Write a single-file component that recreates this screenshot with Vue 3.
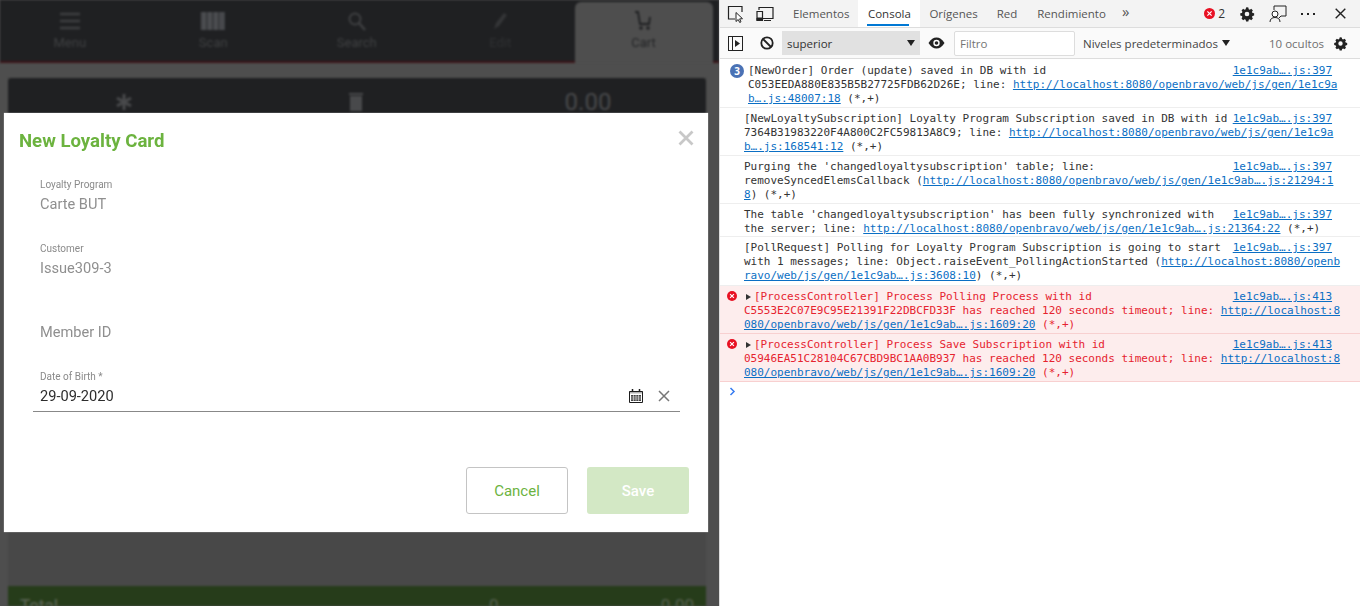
<script setup>
const rows = [
  { first: true, badge: true, src: '1e1c9ab….js:397', lines: [
    [['[NewOrder] Order (update) saved in DB with id']],
    [['C053EEDA880E835B5B27725FDB62D26E; line: '], ['http://localhost:8080/openbravo/web/js/gen/1e1c9a', 1]],
    [['b….js:48007:18', 1], [' (*,+)']] ] },
  { src: '1e1c9ab….js:397', lines: [
    [['[NewLoyaltySubscription] Loyalty Program Subscription saved in DB with id']],
    [['7364B31983220F4A800C2FC59813A8C9; line: '], ['http://localhost:8080/openbravo/web/js/gen/1e1c9a', 1]],
    [['b….js:168541:12', 1], [' (*,+)']] ] },
  { src: '1e1c9ab….js:397', lines: [
    [["Purging the 'changedloyaltysubscription' table; line:"]],
    [['removeSyncedElemsCallback ('], ['http://localhost:8080/openbravo/web/js/gen/1e1c9ab….js:21294:1', 1]],
    [['8', 1], [') (*,+)']] ] },
  { tight: true, src: '1e1c9ab….js:397', lines: [
    [["The table 'changedloyaltysubscription' has been fully synchronized with"]],
    [['the server; line: '], ['http://localhost:8080/openbravo/web/js/gen/1e1c9ab….js:21364:22', 1], [' (*,+)']] ] },
  { loose: true, src: '1e1c9ab….js:397', lines: [
    [['[PollRequest] Polling for Loyalty Program Subscription is going to start']],
    [['with 1 messages; line: Object.raiseEvent_PollingActionStarted ('], ['http://localhost:8080/openb', 1]],
    [['ravo/web/js/gen/1e1c9ab….js:3608:10', 1], [') (*,+)']] ] },
  { err: true, src: '1e1c9ab….js:413', lines: [
    [['[ProcessController] Process Polling Process with id']],
    [['C5553E2C07E9C95E21391F22DBCFD33F has reached 120 seconds timeout; line: '], ['http://localhost:8', 1]],
    [['080/openbravo/web/js/gen/1e1c9ab….js:1609:20', 1], [' (*,+)']] ] },
  { err: true, src: '1e1c9ab….js:413', lines: [
    [['[ProcessController] Process Save Subscription with id']],
    [['05946EA51C28104C67CBD9BC1AA0B937 has reached 120 seconds timeout; line: '], ['http://localhost:8', 1]],
    [['080/openbravo/web/js/gen/1e1c9ab….js:1609:20', 1], [' (*,+)']] ] },
]
const gear = 'M12 2l2 .3.6 2.500 1.600.7 2.200-1.300 2.400 2.400-1.300 2.200.7 1.600 2.500.6v3.400l-2.500.6-.7 1.600 1.300 2.200-2.400 2.400-2.200-1.300-1.600.7-.6 2.500h-3.400l-.6-2.500-1.600-.7-2.200 1.300-2.400-2.400 1.300-2.200-.7-1.600-2.500-.6v-3.400l2.500-.6.7-1.600-1.300-2.200 2.400-2.400 2.200 1.300 1.600-.7.6-2.500zM12 8.500a3.500 3.500 0 100 7 3.500 3.500 0 000-7z'
const barcode = [0, 2, 3.5, 6, 8, 9.5, 12, 14, 15.5, 18, 20, 22]
</script>

<template>
  <div class="root">
    <section class="app">
      <div class="backdrop">
        <nav class="nav">
          <div class="nav-tab">
            <svg width="24" height="20" viewBox="0 0 24 20"><path d="M2 3h20M2 10h20M2 17h20" stroke="#3e3f41" stroke-width="2.500"/></svg>
            <span>Menu</span>
          </div>
          <div class="nav-tab">
            <svg width="24" height="20" viewBox="0 0 24 20"><rect v-for="b in barcode" :key="b" :x="b" y="1" width="1.500" height="18" fill="#55565a"/></svg>
            <span>Scan</span>
          </div>
          <div class="nav-tab">
            <svg width="20" height="20" viewBox="0 0 20 20"><circle cx="8" cy="8" r="5.500" fill="none" stroke="#3e3f41" stroke-width="2"/><path d="M12 12l6 7" stroke="#3e3f41" stroke-width="2.500"/></svg>
            <span>Search</span>
          </div>
          <div class="nav-tab dim">
            <svg width="20" height="20" viewBox="0 0 20 20"><path d="M4 18l2-6 8-10 3 2-8 11z" fill="#343537"/></svg>
            <span>Edit</span>
          </div>
          <div class="nav-tab cart">
            <svg width="20" height="20" viewBox="0 0 20 20"><path d="M1 1h3l2 12h9l1-7" fill="none" stroke="#1e1f21" stroke-width="1.800"/><circle cx="7" cy="17" r="1.800" fill="#1e1f21"/><circle cx="14" cy="17" r="1.800" fill="#1e1f21"/></svg>
            <span>Cart</span>
          </div>
        </nav>
        <div class="panel">
          <div class="receipt-bar">
            <div class="rb-cell">
              <svg width="18" height="18" viewBox="0 0 18 18"><path d="M9 1v16M2 5l14 8M16 5L2 13" stroke="#48494b" stroke-width="3"/></svg>
            </div>
            <div class="rb-cell">
              <svg width="14" height="18" viewBox="0 0 14 18"><rect x="1" y="3" width="12" height="15" fill="#48494b"/><rect x="0" y="0" width="14" height="2" fill="#48494b"/></svg>
            </div>
            <div class="rb-cell amount">0.00</div>
          </div>
          <div class="spacer"></div>
          <div class="total-bar"><span class="t-label">Total</span><span class="t-qty">0</span><span class="t-amount">0.00</span></div>
        </div>
      </div>

      <div class="modal">
        <div class="modal-head">
          <h2>New Loyalty Card</h2>
          <svg class="close" width="16" height="16" viewBox="0 0 16 16"><path d="M1.500 1.500l13 13M14.500 1.500l-13 13" stroke="#c8c8c8" stroke-width="2.800"/></svg>
        </div>
        <div class="field"><label>Loyalty Program</label><div class="val">Carte BUT</div></div>
        <div class="field"><label>Customer</label><div class="val">Issue309-3</div></div>
        <div class="field"><label>&nbsp;</label><div class="val">Member ID</div></div>
        <div class="field date">
          <label>Date of Birth *</label>
          <div class="date-row">
            <span class="val dark">29-09-2020</span>
            <svg width="14" height="14" viewBox="0 0 14 14" class="cal"><path d="M.5 2.500h13v11H.5z" fill="#fff" stroke="#1c1c1c"/><path d="M0 2h14v2.500H0z" fill="#1c1c1c" opacity=".35"/><path d="M3.500 0v3M10.500 0v3" stroke="#1c1c1c" stroke-width="1.500"/><path d="M2 6h10v6H2z" fill="#444"/><path d="M2 8h10M2 10h10M4.500 6v6M7 6v6M9.500 6v6" stroke="#fff" stroke-width=".5"/></svg>
            <svg width="12" height="12" viewBox="0 0 12 12" class="clear"><path d="M1 1l10 10M11 1L1 11" stroke="#777" stroke-width="1.500"/></svg>
          </div>
        </div>
        <div class="actions">
          <button class="btn cancel">Cancel</button>
          <button class="btn save">Save</button>
        </div>
      </div>
    </section>

    <section class="devtools">
      <header class="tabs">
        <svg class="ic" style="margin-left:7px" width="18" height="18" viewBox="0 0 18 18"><path d="M8 14H1.500V1.500H15V7" fill="none" stroke="#222" stroke-width="1.200"/><path d="M9 7.500v9l2.200-2 1.500 3 1.300-.7-1.400-2.900 2.900-.2z" fill="#fff" stroke="#222"/></svg>
        <svg class="ic" style="margin-left:11px" width="18" height="18" viewBox="0 0 18 18"><path d="M3 5V2.500h14v11H7" fill="none" stroke="#222" stroke-width="1.200"/><path d="M1 6.500h5.500v9H1z" fill="none" stroke="#222" stroke-width="1.200"/><path d="M1 13h5.500v2.500H1zM8 15.500h7" fill="#222" stroke="#222"/></svg>
        <span class="tab" style="margin-left:10px">Elementos</span>
        <span class="tab active">Consola</span>
        <span class="tab">Orígenes</span>
        <span class="tab red">Red</span>
        <span class="tab rend">Rendimiento</span>
        <span class="more">»</span>
        <div class="grow"></div>
        <svg width="11" height="11" viewBox="0 0 12 12"><circle cx="6" cy="6" r="6" fill="#e81123"/><path d="M3.700 3.700l4.600 4.600M8.300 3.700L3.700 8.300" stroke="#fff" stroke-width="1.300"/></svg>
        <span class="errcount">2</span>
        <svg style="margin-left:14px" width="16" height="16" viewBox="0 0 24 24"><path :d="gear" fill="#222" fill-rule="evenodd"/></svg>
        <svg style="margin-left:14px" width="18" height="18" viewBox="0 0 18 18"><path d="M5 5V1h12v10h-5l-2 2" fill="none" stroke="#222"/><circle cx="6" cy="9" r="3" fill="#fff" stroke="#222"/><path d="M1 17c0-3 2-4.500 5-4.500s5 1.500 5 4.500" fill="none" stroke="#222"/></svg>
        <span class="dots"><i></i><i></i><i></i></span>
        <svg style="margin:0 14px 0 20px" width="11" height="11" viewBox="0 0 11 11"><path d="M.7.7l9.600 9.600M10.300.7L.7 10.300" stroke="#222" stroke-width="1.400"/></svg>
      </header>
      <div class="toolbar">
        <svg style="margin-left:8px" width="15" height="15" viewBox="0 0 15 15"><rect x=".5" y=".5" width="14" height="14" fill="none" stroke="#222"/><path d="M4.500 1v13" stroke="#222"/><path d="M7 4l5 3.500-5 3.500z" fill="#222"/></svg>
        <svg style="margin-left:17px" width="14" height="14" viewBox="0 0 14 14"><circle cx="7" cy="7" r="5.700" fill="none" stroke="#222" stroke-width="1.800"/><path d="M3 3l8 8" stroke="#222" stroke-width="1.800"/></svg>
        <div class="context"><span>superior</span><i class="caret"></i></div>
        <svg style="margin-left:8px" width="17" height="12" viewBox="0 0 17 12"><path d="M.5 6C3 2 5.500.5 8.500.5S14 2 16.500 6C14 10 11.500 11.500 8.500 11.500S3 10 .5 6z" fill="#222"/><circle cx="8.500" cy="6" r="3.200" fill="#fff"/><circle cx="8.500" cy="6" r="1.800" fill="#222"/></svg>
        <div class="filter">Filtro</div>
        <span class="levels">Niveles predeterminados<i class="caret small"></i></span>
        <div class="grow"></div>
        <span class="hidden-count">10 ocultos</span>
        <svg style="margin:0 12px 0 9px" width="15" height="15" viewBox="0 0 24 24"><path :d="gear" fill="#222" fill-rule="evenodd"/></svg>
      </div>
      <div class="console">
        <div v-for="(r, i) in rows" :key="i" class="msg" :class="{ err: r.err, first: r.first, tight: r.tight, loose: r.loose }">
          <span v-if="r.badge" class="badge">3</span>
          <svg v-if="r.err" class="err-ic" width="10" height="10" viewBox="0 0 12 12"><circle cx="6" cy="6" r="6" fill="#e81123"/><path d="M3.700 3.700l4.600 4.600M8.300 3.700L3.700 8.300" stroke="#fff" stroke-width="1.400"/></svg>
          <a class="src">{{ r.src }}</a>
          <div v-for="(ln, j) in r.lines" :key="j" class="line">
            <i v-if="r.err && j === 0" class="tri"></i><template v-for="(s, k) in ln" :key="k"><a v-if="s[1]">{{ s[0] }}</a><span v-else>{{ s[0] }}</span></template>
          </div>
        </div>
        <div class="prompt">
          <svg width="7" height="9" viewBox="0 0 7 9"><path d="M1.500 1l3.500 3.500L1.500 8" fill="none" stroke="#367cf1" stroke-width="1.500"/></svg>
        </div>
      </div>
    </section>
  </div>
</template>

<style scoped>
.root { display: flex; width: 1360px; height: 606px; overflow: hidden; background: #fff; }
.app { position: relative; width: 719px; height: 606px; overflow: hidden; background: #4e4e4e; font-family: Roboto, sans-serif; flex: none; }
.backdrop { height: 606px; display: flex; flex-direction: column; filter: blur(1.300px); }
.nav { display: flex; height: 59px; flex: none; background: #1f2022; border-bottom: 2px solid #3b1418; padding: 2px 0 0; }
.nav-tab { width: 143.500px; flex: none; display: flex; flex-direction: column; align-items: center; gap: 4px; padding-top: 9px; color: #3f4042; font-size: 13px; box-sizing: border-box; transform: translateX(-2px); }
.nav-tab.dim { color: #303133; }
.nav-tab.cart { width: 138px; margin-left: 2.500px; background: #4e4e4e; border-radius: 6px 6px 0 0; color: #242527; height: 61px; }
.panel { flex: 1; margin: 15px 13px 0 8px; background: #484848; display: flex; flex-direction: column; }
.receipt-bar { display: flex; height: 62px; background: #1f2022; border-radius: 3px; flex: none; }
.rb-cell { width: 232px; display: flex; align-items: flex-start; justify-content: center; padding-top: 15px; box-sizing: border-box; }
.amount { font-size: 24px; color: #48494b; padding-top: 10px; }
.spacer { flex: 1; }
.total-bar { height: 11px; flex: none; background: #263c1a; display: flex; color: #56604f; font-size: 17px; line-height: 20px; padding: 9px 12px 0 12px; align-items: flex-start; overflow: hidden; }
.t-label { width: 469px; font-weight: 500; }
.t-qty { width: 140px; }
.t-amount { margin-left: auto; }

.modal { position: absolute; left: 4px; top: 113px; width: 704px; height: 419px; background: #fff; box-sizing: border-box; padding: 0 28px 0 36px; box-shadow: 0 0 1px #ddd; }
.modal-head { height: 66px; margin-left: -21px; position: relative; padding-top: 17px; box-sizing: border-box; }
.modal-head h2 { margin: 0; font-size: 18.600px; line-height: 23px; font-weight: 700; color: #6cb33f; }
.close { position: absolute; right: -14px; top: 17px; }
.field { height: 64px; box-sizing: border-box; }
.field label { display: block; font-size: 10px; line-height: 12px; color: #8a8a8a; }
.val { font-size: 14.600px; line-height: 20px; color: #8f8f8f; margin-top: 3px; display: block; }
.val.dark { color: #2d2d2d; margin: 0; }
.field.date { height: 100px; }
.date-row { display: flex; align-items: center; height: 30px; margin: -2px 0 0 -7px; padding: 0 10px 0 7px; width: 630px; border-bottom: 1px solid #888; }
.date-row .val { flex: 1; }
.cal { margin-right: 15px; }
.actions { display: flex; justify-content: flex-end; gap: 19px; margin-top: -4px; margin-right: -9px; }
.btn { width: 102px; height: 47px; border-radius: 3px; font-family: Roboto, sans-serif; font-size: 15px; padding: 0; }
.cancel { background: #fff; border: 1px solid #c4c4c4; color: #6cb33f; }
.save { background: #d3e8c5; border: 0; color: #fff; font-weight: 500; }

.devtools { flex: 1; border-left: 1px solid #ddd; display: flex; flex-direction: column; font-family: "Open Sans", sans-serif; color: #444; font-size: 12px; background: #fff; }
.tabs { height: 27px; background: #f3f3f3; border-bottom: 1px solid #ddd; display: flex; align-items: center; flex: none; }
.tab { padding: 0 9px; line-height: 27px; height: 27px; color: #555; font-size: 11.500px; position: relative; box-sizing: border-box; }
.tab.red { padding-left: 10px; }
.tab.rend { padding-left: 11px; }
.tab.active { background: #fff; color: #333; width: 62px; padding: 0; text-align: center; }
.tab.active::after { content: ""; position: absolute; left: 9px; right: 11px; bottom: 1px; height: 2px; background: #0078d4; }
.more { font-size: 15px; margin-left: 7px; line-height: 20px; margin-top: -5px; color: #555; }
.grow { flex: 1; }
.errcount { margin-left: 3px; font-size: 12px; color: #333; }
.dots { display: flex; gap: 4px; margin-left: 14px; }
.dots i { width: 2px; height: 2px; background: #222; display: block; }
.toolbar { height: 30px; background: #fafafa; border-bottom: 1px solid #ddd; display: flex; align-items: center; flex: none; }
.context { margin-left: 8px; width: 138px; height: 24px; box-sizing: border-box; background: #e1e1e1; display: flex; align-items: center; justify-content: space-between; padding: 0 5px; font-size: 11.500px; color: #333; }
.caret { width: 0; height: 0; border: 4px solid transparent; border-top: 6px solid #222; border-bottom: 0; display: inline-block; }
.caret.small { margin-left: 4px; vertical-align: 2px; }
.filter { margin-left: 9px; width: 121px; height: 25px; background: #fff; border: 1px solid #ddd; border-radius: 2px; box-sizing: border-box; padding-left: 5px; color: #757575; font-size: 11.500px; line-height: 23px; }
.levels { margin-left: 8px; color: #444; font-size: 11.500px; }
.hidden-count { color: #6f6f6f; font-size: 11.500px; }
.console { flex: 1; padding-top: 1px; font-family: "DejaVu Sans Mono", monospace; font-size: 11px; color: #333; }
.msg { position: relative; box-sizing: border-box; padding: 4px 20px 1px 24px; border-bottom: 1px solid #eee; }
.msg.tight { padding-bottom: 0; }
.msg.loose { padding-bottom: 2px; }
.msg.first .line { padding-left: 4px; }
.msg.err { background: #fdeded; color: #e6232f; border-bottom-color: #f8d0d0; }
.line { height: 14px; line-height: 14px; white-space: pre; }
.line a, .src { color: #0b6fc4; text-decoration: underline; }
.src { position: absolute; right: 28px; top: 4px; line-height: 14px; }
.badge { position: absolute; left: 10px; top: 4px; width: 14px; height: 14px; border-radius: 50%; background: #4a72b5; color: #fff; font: 700 10px/14px "Open Sans", sans-serif; text-align: center; }
.err-ic { position: absolute; left: 7px; top: 5px; }
.tri { display: inline-block; width: 0; height: 0; border: 3.500px solid transparent; border-left: 5px solid #333; border-right: 0; margin: 0 3px 0 2px; }
.prompt { padding: 4px 0 0 9px; }
</style>
